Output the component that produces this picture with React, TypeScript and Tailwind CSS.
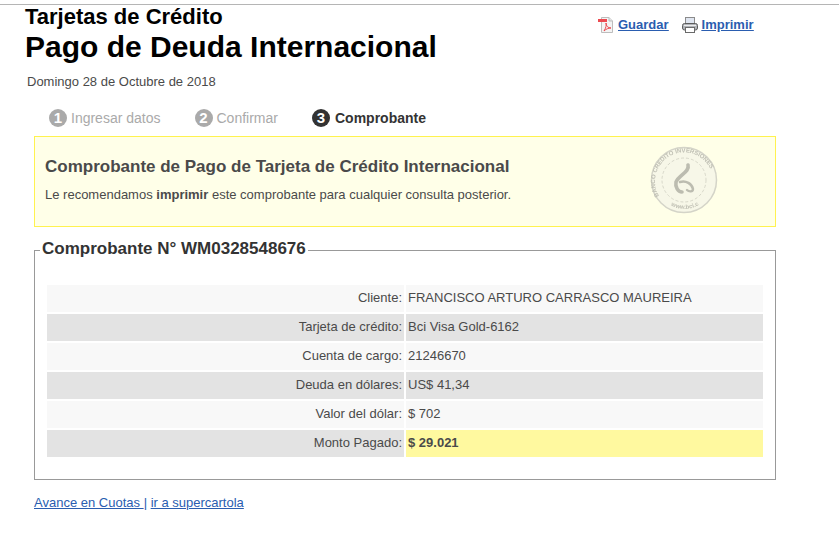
const rows = [
  ["Cliente:", "FRANCISCO ARTURO CARRASCO MAUREIRA"],
  ["Tarjeta de crédito:", "Bci Visa Gold-6162"],
  ["Cuenta de cargo:", "21246670"],
  ["Deuda en dólares:", "US$ 41,34"],
  ["Valor del dólar:", "$ 702"],
]

function PdfIcon() {
  return (
    <svg width="16" height="16" viewBox="0 0 16 16" className="shrink-0">
      <path d="M3.5 .5H11L14.5 4V15.5H3.5Z" fill="#f4f4f4" stroke="#bdbdbd" />
      <path d="M11 .5V4H14.5" fill="#e4e4e4" stroke="#bdbdbd" />
      <rect x="0" y="2" width="9" height="3" fill="#ec4a50" />
      <path d="M6 14C8 11 8.5 8 8 6C8 9 10 11 13 11C10.5 11 8 12 6 14Z" fill="none" stroke="#ec4a50" strokeWidth="1" />
    </svg>
  )
}

function PrintIcon() {
  return (
    <svg width="16" height="16" viewBox="0 0 16 16" className="shrink-0">
      <rect x="3.5" y="0.5" width="9" height="7" fill="#dfe5f0" stroke="#8b8b8b" />
      <rect x="0.5" y="6.5" width="15" height="6.5" rx="2" fill="#b0b3b8" stroke="#5c5c5c" />
      <rect x="3.5" y="10.5" width="9" height="5" fill="#fff" stroke="#6a6a6a" />
      <rect x="2" y="8" width="12" height="1" fill="#ececec" />
    </svg>
  )
}

function Seal() {
  return (
    <svg width="70" height="70" viewBox="0 0 70 70" className="shrink-0 blur-[0.5px]">
      <defs>
        <path id="sealTop" d="M10 51A29 29 0 1 1 64 35" />
        <path id="sealBottom" d="M21 60A29 29 0 0 0 50 60" />
      </defs>
      <circle cx="35" cy="35" r="32.5" fill="#f7f7e8" stroke="#d4d4c8" strokeWidth="1.5" />
      <circle cx="35" cy="35" r="22" fill="none" stroke="#cfcfc2" strokeWidth="0.8" strokeDasharray="3 2" />
      <text fontSize="6" fontWeight="700" fill="#c0c0b4" fontFamily="'Liberation Sans', sans-serif">
        <textPath href="#sealTop">BANCO CREDITO INVERSIONES</textPath>
        <textPath href="#sealBottom" startOffset="1">www.bci.cl</textPath>
      </text>
      <path d="M39 20C41 27 30 30 27 37C26 42 29 47 33 47" fill="none" stroke="#bcbcb0" strokeWidth="3.6" strokeLinecap="round" />
      <path d="M31 37C37 35 43 39 44 44C44 47 40 47 38 45" fill="none" stroke="#bcbcb0" strokeWidth="2.4" strokeLinecap="round" />
    </svg>
  )
}

function Step({ n, label, active }: { n: number; label: string; active?: boolean }) {
  return (
    <div className={`flex items-center text-[14px] ${active ? "gap-[5px] font-bold text-[#333]" : "gap-1 text-[#aaa]"}`}>
      <span
        className={`flex h-[18px] w-[18px] items-center justify-center rounded-full text-[15px] font-bold text-white ${
          active ? "bg-[#333]" : "bg-[#aaa]"
        }`}
      >
        {n}
      </span>
      {label}
    </div>
  )
}

export default function App() {
  return (
    <div className="h-[560px] w-[839px] overflow-hidden bg-white font-['Liberation_Sans',Arial,sans-serif] text-[#4a4a4a]">
      <div className="mt-1 h-px bg-[#b5b5b5]" />

      <div className="relative pl-[25px]">
        <h2 className="text-[22px] leading-[23px] font-bold text-black">Tarjetas de Crédito</h2>
        <h1 className="text-[30px] leading-[37px] font-bold text-black">Pago de Deuda Internacional</h1>
        <div className="absolute top-[12px] left-[598px] flex items-center gap-[13px] text-[13px] leading-4 font-bold text-[#2a5db0] underline">
          <a className="flex items-center gap-1">
            <PdfIcon />
            Guardar
          </a>
          <a className="flex items-center gap-1">
            <PrintIcon />
            Imprimir
          </a>
        </div>
      </div>

      <p className="mt-[9px] pl-[27px] text-[13px] leading-4">Domingo 28 de Octubre de 2018</p>

      <div className="mt-[19px] flex h-[18px] gap-[34px] pl-[49px]">
        <Step n={1} label="Ingresar datos" />
        <Step n={2} label="Confirmar" />
        <Step n={3} label="Comprobante" active />
      </div>

      <div className="mt-[9px] ml-[34px] flex h-[91px] w-[742px] justify-between border border-[#fff24f] bg-[#ffffe8] pt-[20px] pr-[56px] pl-[10px]">
        <div>
          <h3 className="text-[17px] leading-5 font-bold">Comprobante de Pago de Tarjeta de Crédito Internacional</h3>
          <p className="mt-[10px] text-[13px] leading-4">
            Le recomendamos <b>imprimir</b> este comprobante para cualquier consulta posterior.
          </p>
        </div>
        <div className="-mt-[12px]">
          <Seal />
        </div>
      </div>

      <fieldset className="mt-[13px] ml-[34px] w-[742px] border border-[#999] px-3 pt-[25px] pb-[22px]">
        <legend className="-ml-[7px] -translate-y-px px-[2px] text-[17px] leading-5 font-bold text-[#333]">Comprobante N° WM0328548676</legend>
        <div className="grid grid-cols-[357px_357px] gap-x-[2px] gap-y-[2px] text-[13px]">
          {rows.map(([label, value], i) => (
            <div key={label} className="contents">
              <div className={`h-[27px] px-[2px] text-right leading-[26px] ${i % 2 ? "bg-[#e3e3e3]" : "bg-[#f8f8f8]"}`}>{label}</div>
              <div className={`h-[27px] px-[2px] leading-[26px] ${i % 2 ? "bg-[#e3e3e3]" : "bg-[#f8f8f8]"}`}>{value}</div>
            </div>
          ))}
          <div className="h-[27px] bg-[#e3e3e3] px-[2px] text-right leading-[26px]">Monto Pagado:</div>
          <div className="h-[27px] bg-[#fff99f] px-[2px] leading-[26px] font-bold">$ 29.021</div>
        </div>
      </fieldset>

      <p className="mt-[15px] ml-[34px] text-[13px] leading-4 text-[#2a5db0]">
        <a className="underline">Avance en Cuotas </a>| <a className="underline">ir a supercartola</a>
      </p>
    </div>
  )
}
